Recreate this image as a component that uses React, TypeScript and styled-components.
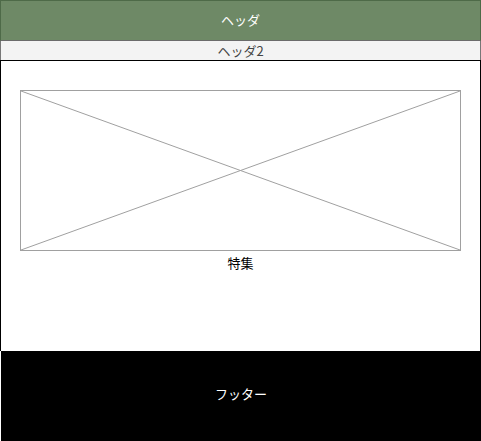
import styled, { createGlobalStyle } from "styled-components";

const GlobalStyle = createGlobalStyle`
  *, *::before, *::after {
    box-sizing: border-box;
  }
  html, body {
    margin: 0;
    padding: 0;
    background: #fff;
  }
  body {
    font-family: "Noto Sans CJK JP", "Noto Sans", sans-serif;
    font-size: 13px;
  }
`;

const App = () => {
  return (
    <Page>
      <GlobalStyle />
      <Header>ヘッダ</Header>
      <SubHeader>ヘッダ2</SubHeader>
      <Main>
        <Feature>
          <Placeholder>
            <svg width="100%" height="100%" preserveAspectRatio="none" viewBox="0 0 439 159">
              <line x1="0" y1="0" x2="439" y2="159" stroke="#a0a0a0" strokeWidth="1" />
              <line x1="0" y1="159" x2="439" y2="0" stroke="#a0a0a0" strokeWidth="1" />
            </svg>
          </Placeholder>
          <Caption>特集</Caption>
        </Feature>
      </Main>
      <Footer>フッター</Footer>
    </Page>
  );
};
export default App;

const Page = styled.div`
  width: 481px;
  height: 441px;
  display: flex;
  flex-direction: column;
  overflow: hidden;

  & > * {
    flex-shrink: 0;
  }
`;

const Header = styled.div`
  height: 41px;
  padding-bottom: 2px;
  border: 1px solid #4e6a48;
  border-bottom-color: #6b6b6b;
  background: #6e8966;
  color: #fff;
  display: flex;
  align-items: center;
  justify-content: center;
  line-height: 1;
`;

const SubHeader = styled.div`
  height: 19px;
  border-left: 1px solid #777;
  border-right: 1px solid #777;
  background: #f3f3f3;
  color: #444;
  display: flex;
  align-items: center;
  justify-content: center;
  line-height: 1;
`;

const Main = styled.div`
  height: 291px;
  border: 1px solid #000;
  border-bottom: none;
  padding: 29px 19px 0;
`;

const Feature = styled.div`
  display: flex;
  flex-direction: column;
  align-items: center;
`;

const Placeholder = styled.div`
  width: 441px;
  height: 161px;
  border: 1px solid #a0a0a0;
  display: flex;

  svg {
    display: block;
  }
`;

const Caption = styled.div`
  margin-top: 4px;
  color: #000;
  line-height: 16px;
`;

const Footer = styled.div`
  height: 90px;
  padding-bottom: 6px;
  margin-left: 1px;
  background: #000;
  color: #fff;
  display: flex;
  align-items: center;
  justify-content: center;
  line-height: 1;
`;
